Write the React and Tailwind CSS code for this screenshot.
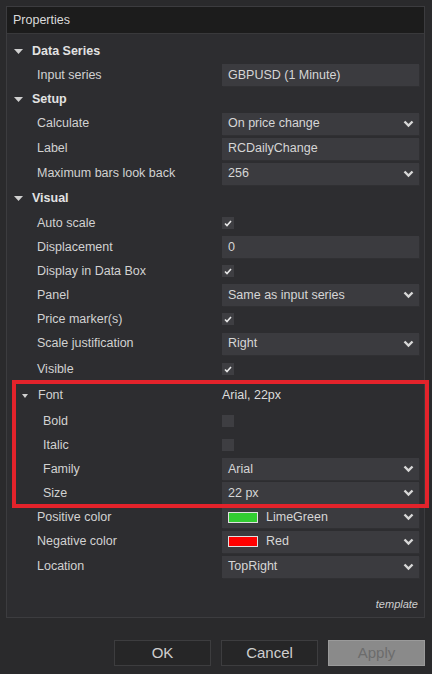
import React from "react";

const FONT = { fontFamily: "'Liberation Sans', Arial, sans-serif" };

function Chevron() {
  return (
    <svg width="11" height="8" viewBox="0 0 11 8" className="shrink-0">
      <polyline points="1.5,1.5 5.5,5.5 9.5,1.5" fill="none" stroke="#d8d8d8" strokeWidth="2.4" />
    </svg>
  );
}

function Caret({ small }) {
  return small ? (
    <svg width="6" height="4" viewBox="0 0 6 4">
      <polygon points="0,0 6,0 3,4" fill="#d0d0d0" />
    </svg>
  ) : (
    <svg width="9" height="5" viewBox="0 0 9 5">
      <polygon points="0,0 9,0 4.5,5" fill="#d0d0d0" />
    </svg>
  );
}

function Box({ children, select }) {
  return (
    <div className="w-[197px] h-[22px] bg-[#3b3b3f] shadow-[1px_1px_0_#303033] flex items-center justify-between pl-[6px] pr-[5px] text-[#d6d6d6]">
      <div className="flex items-center gap-[8px]">{children}</div>
      {select && <Chevron />}
    </div>
  );
}

function Check({ checked }) {
  return (
    <div className="w-[12px] h-[12px] bg-[#3e3e42] flex items-center justify-center">
      {checked && (
        <svg width="8" height="7" viewBox="0 0 8 7">
          <polyline points="1,3.5 3,5.5 7,1" fill="none" stroke="#e8e8e8" strokeWidth="1.6" />
        </svg>
      )}
    </div>
  );
}

function Swatch({ color }) {
  return <div className="w-[30px] h-[11px] border border-[#e0e0e0]" style={{ backgroundColor: color }} />;
}

const rows = [
  { type: "section", label: "Data Series", h: "h-[24px]" },
  { label: "Input series", h: "h-[24px]", value: <Box>GBPUSD (1 Minute)</Box> },
  { type: "section", label: "Setup", h: "h-[24px]" },
  { label: "Calculate", h: "h-[25px]", value: <Box select>On price change</Box> },
  { label: "Label", h: "h-[25px]", value: <Box>RCDailyChange</Box> },
  { label: "Maximum bars look back", h: "h-[25px]", value: <Box select>256</Box> },
  { type: "section", label: "Visual", h: "h-[25px]" },
  { label: "Auto scale", h: "h-[24px]", value: <Check checked /> },
  { label: "Displacement", h: "h-[24px]", value: <Box>0</Box> },
  { label: "Display in Data Box", h: "h-[24px]", value: <Check checked /> },
  { label: "Panel", h: "h-[24px]", value: <Box select>Same as input series</Box> },
  { label: "Price marker(s)", h: "h-[24px]", value: <Check checked /> },
  { label: "Scale justification", h: "h-[25px]", value: <Box select>Right</Box> },
  { label: "Visible", h: "h-[26px]", value: <Check checked /> },
  { type: "sub", label: "Font", h: "h-[27px]", value: <span className="text-[#dcdcdc]">Arial, 22px</span> },
  { label: "Bold", h: "h-[24px]", indent: true, value: <Check /> },
  { label: "Italic", h: "h-[24px]", indent: true, value: <Check /> },
  { label: "Family", h: "h-[24px]", indent: true, value: <Box select>Arial</Box> },
  { label: "Size", h: "h-[24px]", indent: true, value: <Box select>22 px</Box> },
  {
    label: "Positive color",
    h: "h-[24px]",
    value: (
      <Box select>
        <Swatch color="#32cd32" />
        <span>LimeGreen</span>
      </Box>
    ),
  },
  {
    label: "Negative color",
    h: "h-[25px]",
    value: (
      <Box select>
        <Swatch color="#ff0000" />
        <span>Red</span>
      </Box>
    ),
  },
  { label: "Location", h: "h-[25px]", value: <Box select>TopRight</Box> },
];

function Row({ row }) {
  if (row.type === "section") {
    return (
      <div className={`${row.h} flex items-center`}>
        <div className="w-[18px] pl-[7px] flex items-center">
          <Caret />
        </div>
        <span className="pl-[7px] font-bold text-[#e2e2e2]">{row.label}</span>
      </div>
    );
  }
  const labelPad = row.type === "sub" ? "pl-[15px]" : row.indent ? "pl-[36px]" : "pl-[30px]";
  return (
    <div className={`${row.h} flex items-center`}>
      <div className={`w-[215px] shrink-0 flex items-center ${labelPad} text-[#d2d2d2]`}>
        {row.type === "sub" && (
          <span className="w-[16px] flex items-center">
            <Caret small />
          </span>
        )}
        {row.label}
      </div>
      <div className="flex items-center">{row.value}</div>
    </div>
  );
}

export default function App() {
  return (
    <div className="relative w-[432px] h-[674px] bg-[#2a2a2c] overflow-hidden text-[12.5px]" style={FONT}>
      <div className="pt-[6px] pl-[6px]">
        <div className="w-[419px] h-[612px] border border-[#3c3c3f] bg-[#2d2d30] flex flex-col">
          {/* Header */}
          <div className="h-[27px] bg-[#1c1c1c] flex items-center pl-[6px] text-[#dadada] border-b border-[#39393b]">
            Properties
          </div>
          <div className="pt-[5px] flex flex-col">
            {rows.map((r) => (
              <Row key={r.label} row={r} />
            ))}
          </div>
          <div className="flex-1" />
          <div className="flex justify-end pr-[6px] pb-[5px] text-[11px] italic text-[#cfcfcf]">template</div>
        </div>
      </div>

      {/* Buttons */}
      <div className="flex justify-end gap-[10px] pt-[22px] pr-[7px] text-[15px]">
        <button className="w-[97px] h-[26px] bg-[#262627] border border-[#3d3d3f] text-[#cfcfcf]">OK</button>
        <button className="w-[97px] h-[26px] bg-[#262627] border border-[#3d3d3f] text-[#cfcfcf]">Cancel</button>
        <button className="w-[97px] h-[26px] bg-[#8a8a8a] border border-[#9a9a9a] text-[#6c6c6c]">Apply</button>
      </div>

      {/* Red annotation box */}
      <div className="absolute left-[12px] top-[380px] w-[417px] h-[128px] border-[4px] border-[#e3232b] pointer-events-none" />
    </div>
  );
}
